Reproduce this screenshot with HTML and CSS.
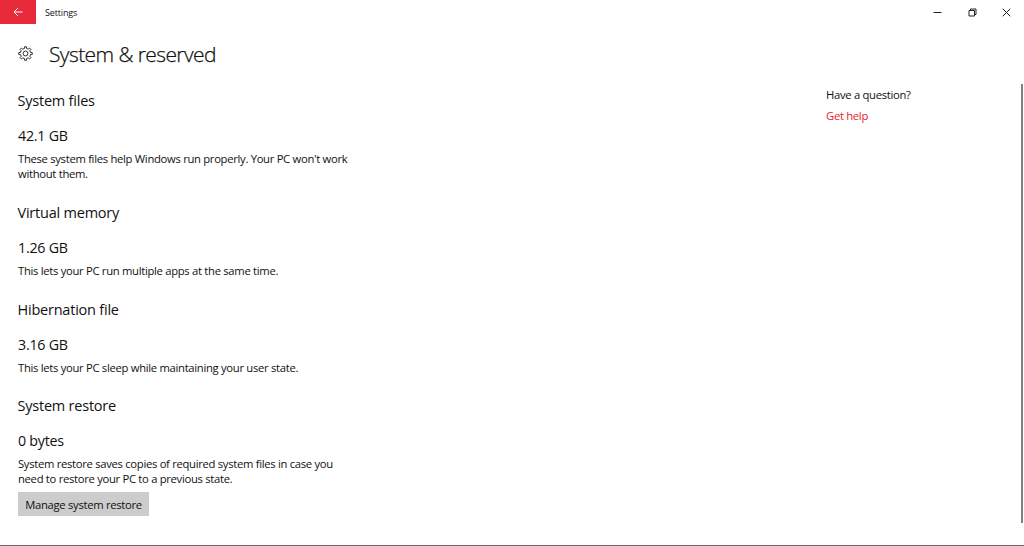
FILE: index.html
```
<!DOCTYPE html>
<html lang="en">
<head>
    <meta charset="UTF-8">
    <title>Settings</title>
    <meta name="viewport" content="width=device-width, initial-scale=1.0">
    <link rel="stylesheet" href="styles.css">
</head>
<body>
    <div class="window">
        <header class="titlebar">
            <button class="back" aria-label="Back">
                <svg width="10" height="10" viewBox="0 0 10 10"><path d="M9.5 5H1M4.8 1.2L1 5l3.8 3.8"/></svg>
            </button>
            <span class="app-name">Settings</span>
            <div class="controls">
                <svg width="9" height="9" viewBox="0 0 9 9"><path d="M0.5 4.5h8"/></svg>
                <svg width="9" height="9" viewBox="0 0 9 9"><path d="M1 2.5h5.5V8H1zM2.5 2.5V1H8v5.5H6.5"/></svg>
                <svg width="9" height="9" viewBox="0 0 9 9"><path d="M0.7 0.7l7.6 7.6M8.3 0.7L0.7 8.3"/></svg>
            </div>
        </header>
        <div class="page-title">
            <svg class="gear" width="15" height="15" viewBox="0 0 16 16">
                <path d="M6.8 2.7L7 .8h2l.2 1.9 1.7.7L12.4 2.2l1.4 1.4-1.2 1.5.7 1.7 1.9.2v2l-1.9.2-.7 1.7 1.2 1.5-1.4 1.4-1.5-1.2-1.7.7L9 15.2H7l-.2-1.9-1.7-.7-1.5 1.2-1.4-1.4 1.2-1.5-.7-1.7L.8 9V7l1.9-.2.7-1.7-1.2-1.5 1.4-1.4 1.5 1.2z"/>
                <circle cx="8" cy="8" r="2.6"/>
            </svg>
            <h1>System &amp; reserved</h1>
        </div>
        <main class="content">
            <div class="sections">
                <section>
                    <h2>System files</h2>
                    <div class="size">42.1 GB</div>
                    <p>These system files help Windows run properly. Your PC won't work<br>without them.</p>
                </section>
                <section>
                    <h2>Virtual memory</h2>
                    <div class="size">1.26 GB</div>
                    <p>This lets your PC run multiple apps at the same time.</p>
                </section>
                <section>
                    <h2>Hibernation file</h2>
                    <div class="size">3.16 GB</div>
                    <p>This lets your PC sleep while maintaining your user state.</p>
                </section>
                <section>
                    <h2>System restore</h2>
                    <div class="size">0 bytes</div>
                    <p>System restore saves copies of required system files in case you<br>need to restore your PC to a previous state.</p>
                    <button class="manage">Manage system restore</button>
                </section>
            </div>
            <aside class="help">
                <div>Have a question?</div>
                <a href="#">Get help</a>
            </aside>
            <div class="scrollbar"></div>
        </main>
    </div>
</body>
</html>
```

FILE: styles.css
```
* { box-sizing: border-box; }
body { margin: 0; background: #fff; color: #111; font-family: "Open Sans", "Noto Sans", sans-serif; font-size: 11.25px; line-height: 15px; letter-spacing: -0.3px; }
h1, h2, p { margin: 0; font-weight: 400; }
button { border: 0; padding: 0; font: inherit; color: inherit; letter-spacing: inherit; }
svg { display: block; fill: none; stroke: #222; stroke-width: 1; }
.window { height: 546px; display: flex; flex-direction: column; overflow: hidden; border-bottom: 1px solid #6b6b6b; }

.titlebar { height: 24px; flex: none; display: flex; align-items: center; }
.back { width: 36px; height: 24px; background: #e92a3a; display: flex; align-items: center; justify-content: center; }
.back svg { stroke: #fff; }
.app-name { margin-left: 9px; padding-top: 1px; font-size: 9px; line-height: 15px; letter-spacing: -0.15px; }
.controls { margin-left: auto; padding-right: 13px; display: flex; gap: 25.5px; }

.page-title { height: 60px; flex: none; display: flex; align-items: center; padding-left: 18px; }
.gear { margin-bottom: 1px; }
h1 { margin-left: 16px; font-size: 21px; font-weight: 300; line-height: 30px; letter-spacing: -0.58px; -webkit-text-stroke: 0.25px #111; }

.content { height: 439px; display: flex; }
.sections { width: 808px; padding: 7.4px 0 0 18px; white-space: nowrap; }
section { margin-bottom: 21.65px; }
h2 { font-size: 14.5px; line-height: 20px; margin: 0 0 15px -0.5px; letter-spacing: -0.22px; }
.size { font-size: 14.25px; line-height: 20px; margin-bottom: 5px; letter-spacing: -0.25px; }
.manage { display: block; width: 131px; height: 24px; margin-top: 5.75px; padding-top: 1px; background: #ccc; }

.help { padding: 3px 0 0 18px; }
.help a { display: block; margin-top: 6px; color: #e81c2e; text-decoration: none; }
.scrollbar { width: 2px; height: 439px; margin-left: auto; margin-right: 1px; background: #808080; }
```
